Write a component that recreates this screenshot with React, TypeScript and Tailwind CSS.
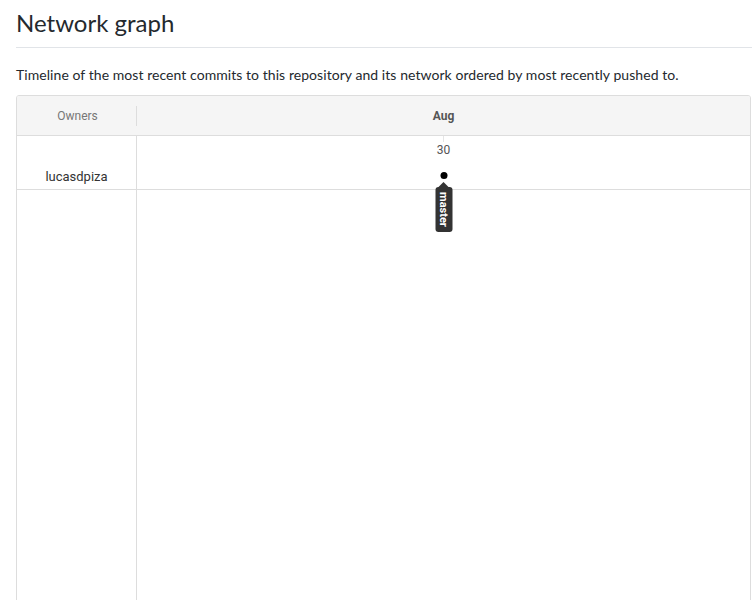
import React from "react";

export default function App() {
  return (
    <div className="w-[752px] bg-white pl-4 text-[#24292e]" style={{ fontFamily: 'Lato, "Segoe UI", sans-serif' }}>
      <div className="border-b border-[#e1e4e8] pt-[7px] pb-[8px]">
        <h2 className="text-[24px] leading-[32px] font-normal">Network graph</h2>
      </div>
      <p className="mt-[17px] text-[14px] leading-[20px] tracking-[0.06px]">
        Timeline of the most recent commits to this repository and its network ordered by most recently pushed to.
      </p>
      <div
        className="mt-[10px] mr-[1px] h-[520px] rounded-[3px] border border-[#dddddd] flex flex-col overflow-hidden"
        style={{ fontFamily: 'Roboto, "Liberation Sans", Arial, sans-serif' }}
      >
        <div className="flex h-[40px] shrink-0 border-b border-[#dddddd] bg-[#f5f5f5]">
          <div className="flex w-[120px] items-center">
            <div className="flex-1 pl-[2px] text-center text-[12px] text-[#777777]">Owners</div>
            <div className="h-[20px] w-px bg-[#dddddd]" />
          </div>
          <div className="flex flex-1 items-center justify-center text-[12px] font-bold text-[#555555]">Aug</div>
        </div>
        <div className="flex flex-1">
          <div className="w-[120px] border-r border-[#dddddd]">
            <div className="flex h-[54px] items-end justify-center border-b border-[#dddddd] pb-[3px] text-[13px] text-[#333333]">
              lucasdpiza
            </div>
          </div>
          <div className="relative flex-1">
            <div className="flex h-[54px] flex-col items-center border-b border-[#dddddd]">
              <div className="h-[6px] w-px bg-[#e5e5e5]" />
              <div className="mt-[1px] text-[12px] leading-[14px] text-[#555555]">30</div>
            </div>
            <div className="absolute left-1/2 top-[36px] h-[7px] w-[7px] -translate-x-1/2 rounded-full bg-black" />
            <div className="absolute left-1/2 top-[46px] flex -translate-x-1/2 flex-col items-center">
              <div className="h-0 w-0 border-x-[5px] border-b-[5px] border-x-transparent border-b-[#333333]" />
              <div className="flex h-[45px] w-[17px] items-center justify-center rounded-[3px] bg-[#333333]">
                <span className="rotate-90 whitespace-nowrap text-[11px] font-bold leading-none text-white">master</span>
              </div>
            </div>
          </div>
        </div>
      </div>
    </div>
  );
}
